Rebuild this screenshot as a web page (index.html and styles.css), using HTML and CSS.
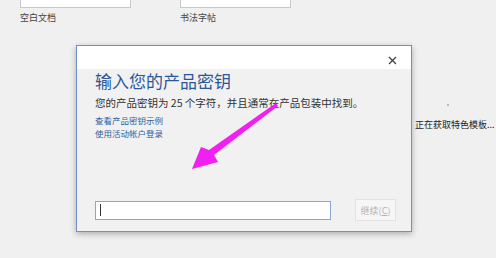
FILE: index.html
```html
<!DOCTYPE html>
<html lang="zh-CN">
<head>
    <meta charset="UTF-8"/>
    <title>输入您的产品密钥</title>
    <link rel="stylesheet" href="styles.css">
</head>
<body>
<div class="page">
    <div class="templates">
        <div class="template">
            <div class="thumb"></div>
            <div class="template-name">空白文档</div>
        </div>
        <div class="template">
            <div class="thumb"></div>
            <div class="template-name">书法字帖</div>
        </div>
    </div>
    <div class="loading">
        <span class="loading-dot"></span>
        <span class="loading-text">正在获取特色模板...</span>
    </div>
</div>

<div class="dialog" role="dialog" aria-label="输入您的产品密钥">
    <div class="dialog-header">
        <button class="close" aria-label="关闭">
            <svg width="9" height="9" viewBox="0 0 9 9">
                <path d="M1 1L8 8M8 1L1 8" stroke="#444" stroke-width="1.4"/>
            </svg>
        </button>
    </div>
    <div class="dialog-body">
        <h1>输入您的产品密钥</h1>
        <p class="hint">您的产品密钥为 25 个字符，并且通常在产品包装中找到。</p>
        <a class="link first" href="#">查看产品密钥示例</a>
        <a class="link" href="#">使用活动帐户登录</a>
        <div class="footer">
            <div class="key-input"><span class="caret"></span></div>
            <button class="continue">继续(<u>C</u>)</button>
        </div>
    </div>
</div>

<!-- annotation arrow pointing at the key field -->
<svg class="arrow" width="496" height="258" viewBox="0 0 496 258">
    <polygon points="276,103 278,106 214,155 218,162 192,169 201,147 209,150" fill="#f21ff2"/>
</svg>
</body>
</html>
```

FILE: styles.css
```css
body {
    margin: 0;
    background-color: #f0f0f0;
    font-family: "Noto Sans CJK SC", "Noto Sans", sans-serif;
    color: #333;
    overflow: hidden;
}

.page {
    height: 258px;
    padding-left: 20px;
}

.templates {
    display: flex;
    gap: 49px;
}

.thumb {
    width: 109px;
    height: 40px;
    margin-top: -34px;
    background: #fff;
    border: 1px solid #c8c8c8;
}

.template-name {
    font-size: 9px;
    line-height: 12px;
    margin-top: 4px;
    color: #444;
}

.loading {
    display: flex;
    flex-direction: column;
    margin-left: 395px;
    margin-top: 80px;
}

.loading-dot {
    width: 2px;
    height: 2px;
    background: #bbb;
    margin-left: 32px;
}

.loading-text {
    font-size: 9px;
    line-height: 12px;
    margin-top: 13px;
    color: #222;
    white-space: nowrap;
}

.dialog {
    position: absolute;
    left: 76px;
    top: 45px;
    width: 334px;
    height: 185px;
    border: 1px solid #6f8fc6;
    background: #f1f1f1;
    box-shadow: 0 2px 6px rgba(0, 0, 0, 0.28);
    display: flex;
    flex-direction: column;
}

.dialog-header {
    height: 23px;
    background: #fff;
    display: flex;
    justify-content: flex-end;
    align-items: flex-start;
}

.close {
    background: transparent;
    border: none;
    padding: 0;
    margin: 10px 14px 0 0;
    width: 9px;
    height: 9px;
    display: flex;
}

.dialog-body {
    flex: 1;
    display: flex;
    flex-direction: column;
    padding: 0 14px 10px 18px;
}

h1 {
    margin: 1px 0 0;
    font-size: 17px;
    line-height: 22px;
    font-weight: normal;
    color: #2b579a;
}

.hint {
    margin: 3px 0 0;
    font-size: 10.5px;
    line-height: 16px;
    color: #333;
}

.link {
    font-size: 8.5px;
    line-height: 13px;
    color: #2e5f9e;
    text-decoration: none;
}

.link.first {
    margin-top: 3px;
}

.footer {
    margin-top: auto;
    display: flex;
    align-items: center;
    gap: 24px;
}

.key-input {
    width: 234px;
    height: 17px;
    background: #fff;
    border: 1px solid #8aa6d6;
    display: flex;
    align-items: center;
}

.caret {
    width: 1px;
    height: 12px;
    margin-left: 4px;
    background: #333;
}

.continue {
    width: 41px;
    height: 22px;
    padding: 0;
    background: #f6f6f6;
    border: 1px solid #e2e2e2;
    color: #b3b3b3;
    font-family: inherit;
    font-size: 9px;
}

.arrow {
    position: absolute;
    left: 0;
    top: 0;
    pointer-events: none;
}
```
